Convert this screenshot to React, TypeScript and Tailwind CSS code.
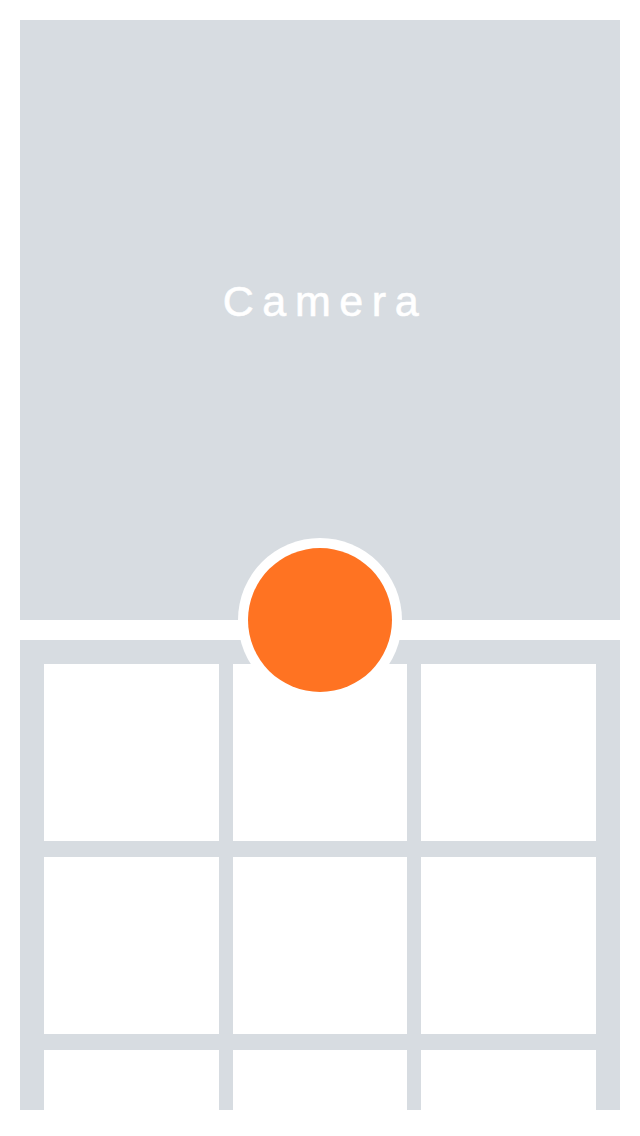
import React from "react";

export default function App() {
  const cells = Array.from({ length: 9 });
  return (
    <div className="relative w-[640px] h-[1136px] bg-white p-[20px]">
      <div className="h-[600px] bg-[#d7dce1] flex items-center justify-center pb-[37px] pl-[10px]">
        <span
          className="text-white text-[43px] tracking-[0.2em] leading-none [-webkit-text-stroke:0.6px_white]"
          style={{ fontFamily: '"Liberation Sans", Arial, sans-serif' }}
        >
          Camera
        </span>
      </div>
      <div className="mt-[20px] h-[470px] bg-[#d7dce1] overflow-hidden px-[24px] pt-[24px]">
        <div className="grid grid-cols-3 gap-x-[14px] gap-y-[16px]">
          {cells.map((_, i) => (
            <div key={i} className="h-[177px] bg-white" />
          ))}
        </div>
      </div>
      <div className="absolute left-[238px] top-[538px] w-[164px] h-[164px] rounded-full bg-white p-[10px]">
        <div className="w-full h-full rounded-full bg-[#ff7322]" />
      </div>
    </div>
  );
}
